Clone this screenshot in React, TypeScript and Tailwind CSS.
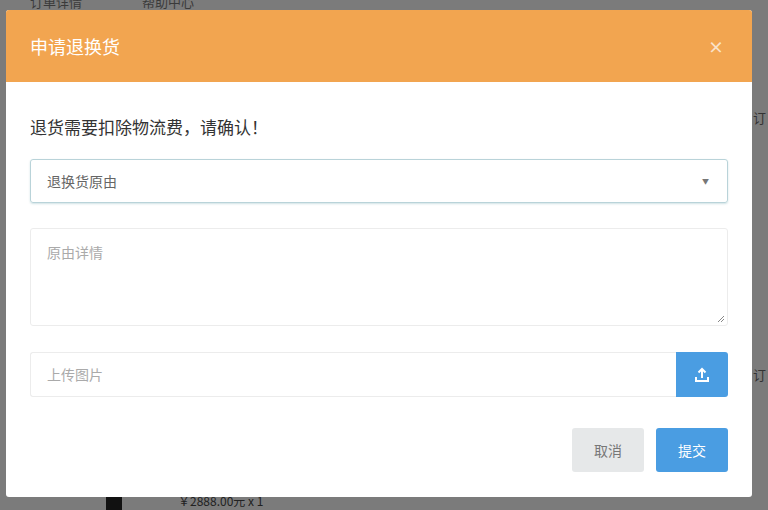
export default function App() {
  const f = { fontFamily: '"Noto Sans CJK SC", "Liberation Sans", sans-serif' };
  return (
    <div className="relative w-[768px] h-[510px] overflow-hidden bg-[#7b7b7b]" style={f}>
      <div className="absolute left-[30px] top-[-8px] flex gap-[60px] text-[13px] text-[#3a3a3a]"><span>订单详情</span><span>帮助中心</span></div>
      <div className="absolute right-[2px] top-[108px] text-[13px] text-[#333]">订</div>
      <div className="absolute right-[2px] top-[365px] text-[13px] text-[#333]">订</div>
      <div className="absolute left-[106px] top-[494px] w-[16px] h-[20px] bg-[#111]" />
      <div className="absolute left-[178px] top-[492px] text-[12px] text-[#222]">￥2888.00元 x 1</div>
      <div className="absolute left-[6px] top-[10px] w-[746px] h-[487px] bg-white rounded-[3px] overflow-hidden flex flex-col">
        <div className="h-[72px] bg-[#f2a550] flex items-center justify-between px-[24px] shrink-0">
          <span className="text-white text-[18px]">申请退换货</span>
          <span className="text-white/70 text-[16px] font-bold mr-[4px]">×</span>
        </div>
        <div className="px-[24px] pt-[30px] flex flex-col">
          <div className="text-[17px] text-[#333] leading-[30px]">退货需要扣除物流费，请确认！</div>
          <div className="mt-[17px] h-[44px] border border-[#b9d3d9] rounded-[3px] shadow-[0_1px_2px_rgba(100,160,170,0.3)] flex items-center justify-between px-[16px]">
            <span className="text-[14px] text-[#666]">退换货原由</span>
            <span className="text-[7px] text-[#777] mr-[2px]">▼</span>
          </div>
          <div className="mt-[25px] h-[98px] border border-[#ececec] rounded-[3px] px-[16px] py-[10px] relative">
            <span className="text-[14px] text-[#aaa]">原由详情</span>
            <svg className="absolute right-[2px] bottom-[2px]" width="8" height="8" viewBox="0 0 8 8"><path d="M1 7L7 1M4 7L7 4" stroke="#888" strokeWidth="1" /></svg>
          </div>
          <div className="mt-[26px] h-[45px] flex">
            <div className="flex-1 border border-[#ececec] border-r-0 rounded-l-[3px] flex items-center px-[16px] text-[14px] text-[#aaa]">上传图片</div>
            <div className="w-[52px] bg-[#4a9de2] rounded-r-[3px] flex items-center justify-center">
              <svg width="18" height="18" viewBox="0 0 18 18" fill="none" stroke="white" strokeWidth="2"><path d="M9 12V3M5.5 6.5L9 3l3.5 3.5M3 11v4h12v-4" /></svg>
            </div>
          </div>
          <div className="mt-[31px] flex justify-end gap-[12px]">
            <div className="w-[72px] h-[44px] bg-[#e6e8e9] rounded-[3px] flex items-center justify-center text-[14px] text-[#777]">取消</div>
            <div className="w-[72px] h-[44px] bg-[#4a9de2] rounded-[3px] flex items-center justify-center text-[14px] text-white">提交</div>
          </div>
        </div>
      </div>
    </div>
  );
}
